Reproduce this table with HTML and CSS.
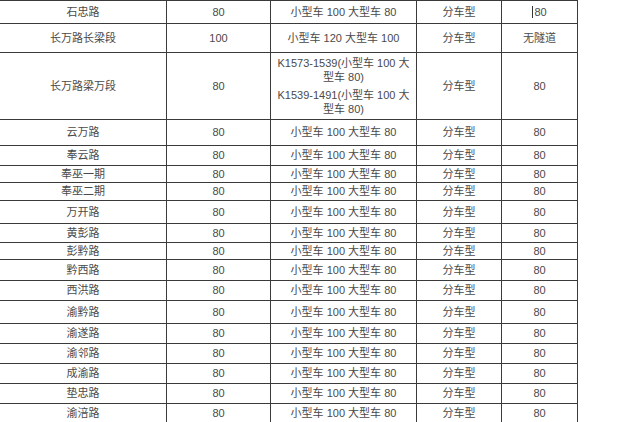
FILE: index.html
```html
<!DOCTYPE html>
<html lang="zh-CN">
<head>
<meta charset="utf-8">
<title>限速表</title>
<link rel="stylesheet" href="styles.css">
</head>
<body>
<div class="sheet">
  <div class="c">石忠路</div><div class="c">80</div><div class="c">小型车 100 大型车 80</div><div class="c">分车型</div><div class="c"><span class="caret"></span>80</div>
  <div class="c">长万路长梁段</div><div class="c">100</div><div class="c">小型车 120 大型车 100</div><div class="c">分车型</div><div class="c">无隧道</div>
  <div class="c">长万路梁万段</div><div class="c">80</div>
  <div class="c multi"><p class="seg">K1573-1539(小型车 100 大<br>型车 80)</p><p class="seg">K1539-1491(小型车 100 大<br>型车 80)</p></div>
  <div class="c">分车型</div><div class="c">80</div>
  <div class="c">云万路</div><div class="c">80</div><div class="c">小型车 100 大型车 80</div><div class="c">分车型</div><div class="c">80</div>
  <div class="c">奉云路</div><div class="c">80</div><div class="c">小型车 100 大型车 80</div><div class="c">分车型</div><div class="c">80</div>
  <div class="c">奉巫一期</div><div class="c">80</div><div class="c">小型车 100 大型车 80</div><div class="c">分车型</div><div class="c">80</div>
  <div class="c">奉巫二期</div><div class="c">80</div><div class="c">小型车 100 大型车 80</div><div class="c">分车型</div><div class="c">80</div>
  <div class="c">万开路</div><div class="c">80</div><div class="c">小型车 100 大型车 80</div><div class="c">分车型</div><div class="c">80</div>
  <div class="c">黄彭路</div><div class="c">80</div><div class="c">小型车 100 大型车 80</div><div class="c">分车型</div><div class="c">80</div>
  <div class="c">彭黔路</div><div class="c">80</div><div class="c">小型车 100 大型车 80</div><div class="c">分车型</div><div class="c">80</div>
  <div class="c">黔西路</div><div class="c">80</div><div class="c">小型车 100 大型车 80</div><div class="c">分车型</div><div class="c">80</div>
  <div class="c">西洪路</div><div class="c">80</div><div class="c">小型车 100 大型车 80</div><div class="c">分车型</div><div class="c">80</div>
  <div class="c">渝黔路</div><div class="c">80</div><div class="c">小型车 100 大型车 80</div><div class="c">分车型</div><div class="c">80</div>
  <div class="c">渝遂路</div><div class="c">80</div><div class="c">小型车 100 大型车 80</div><div class="c">分车型</div><div class="c">80</div>
  <div class="c">渝邻路</div><div class="c">80</div><div class="c">小型车 100 大型车 80</div><div class="c">分车型</div><div class="c">80</div>
  <div class="c">成渝路</div><div class="c">80</div><div class="c">小型车 100 大型车 80</div><div class="c">分车型</div><div class="c">80</div>
  <div class="c">垫忠路</div><div class="c">80</div><div class="c">小型车 100 大型车 80</div><div class="c">分车型</div><div class="c">80</div>
  <div class="c">渝涪路</div><div class="c">80</div><div class="c">小型车 100 大型车 80</div><div class="c">分车型</div><div class="c">80</div>
</div>
</body>
</html>
```
FILE: styles.css
```css
html, body {
  margin: 0;
  padding: 0;
  background: #ffffff;
  overflow: hidden;
}

.sheet {
  display: grid;
  width: 577px;
  padding: 1px 1px 1px 0;
  gap: 1px;
  background: #3a3a3a;
  grid-template-columns: 166px 103px 145px 84px 75px;
  grid-template-rows: 22px 28px 66px 25px 19px 16px 17px 22px 18px 16px 20px 19px 22px 19px 19px 19px 19px 19px;
  font-family: "Liberation Sans", "Noto Sans CJK SC", sans-serif;
  font-size: 11px;
  line-height: 13px;
  color: #4a4a4a;
}

.c {
  background: #ffffff;
  display: flex;
  align-items: center;
  justify-content: center;
  text-align: center;
  white-space: nowrap;
  overflow: hidden;
}

.multi {
  flex-direction: column;
  align-items: stretch;
  gap: 4px;
}

.seg {
  margin: 0;
  width: 100%;
  text-align: center;
  line-height: 14px;
}

.caret {
  display: inline-block;
  width: 1px;
  height: 12px;
  background: #333333;
  margin-right: 1px;
}
```
